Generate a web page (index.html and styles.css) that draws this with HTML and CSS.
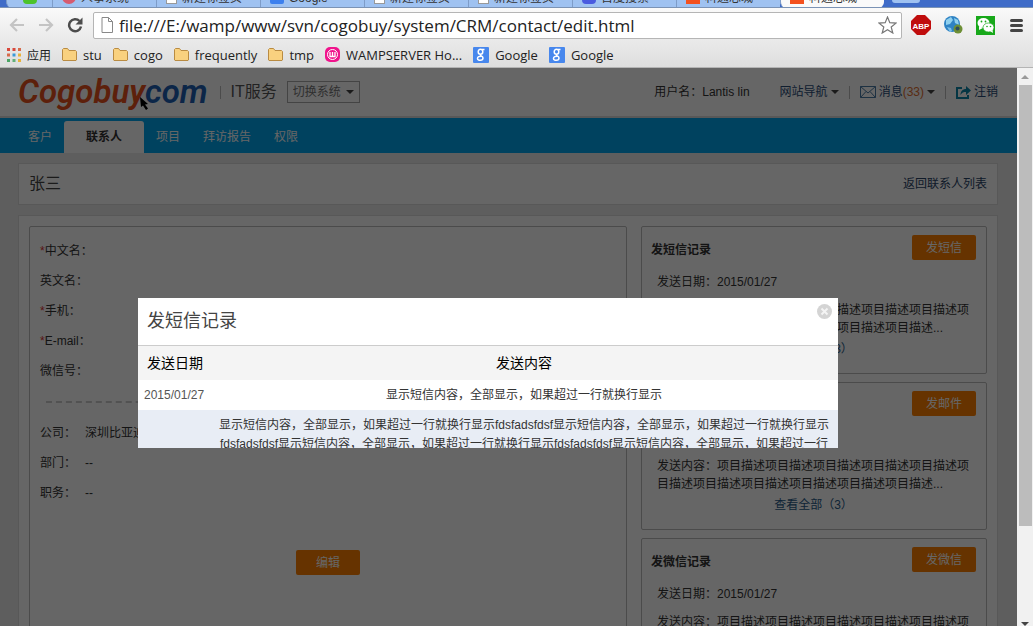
FILE: index.html
```html
<!DOCTYPE html>
<html lang="zh-CN">
<head>
  <meta charset="UTF-8">
  <meta name="viewport" content="width=device-width, initial-scale=1.0">
  <title>编辑联系人</title>
  <link rel="stylesheet" href="styles.css">
</head>
<body>
  <!-- browser -->
  <div class="tab-strip">
    <div class="tab tab-first"><i class="fav green"></i></div>
    <div class="tab"><i class="fav red"></i>人事系统</div>
    <div class="tab"><i class="fav doc"></i>新建标签页</div>
    <div class="tab"><i class="fav blue"></i>Google</div>
    <div class="tab"><i class="fav doc"></i>新建标签页</div>
    <div class="tab"><i class="fav doc"></i>新建标签页</div>
    <div class="tab"><i class="fav paw"></i>百度搜索</div>
    <div class="tab"><i class="fav orange"></i>科通芯城</div>
    <div class="tab current"><i class="fav orange"></i>科通芯城</div>
    <div class="new-tab"></div>
  </div>

  <div class="toolbar">
    <button class="tool" aria-label="后退"><svg width="16" height="14" viewBox="0 0 16 14"><path d="M15 7H2M8 1L2 7l6 6" fill="none" stroke="#c4c4c4" stroke-width="2.2"/></svg></button>
    <button class="tool" aria-label="前进"><svg width="16" height="14" viewBox="0 0 16 14"><path d="M1 7h13M8 1l6 6-6 6" fill="none" stroke="#c4c4c4" stroke-width="2.2"/></svg></button>
    <button class="tool" aria-label="刷新"><svg width="16" height="16" viewBox="0 0 16 16"><path d="M12.5 4A6 6 0 1 0 14 9.500" fill="none" stroke="#4c4c4c" stroke-width="2.500"/><path d="M15.500 0.500v7h-7z" fill="#4c4c4c"/></svg></button>
    <div class="address">
      <svg width="12" height="16" viewBox="0 0 12 16"><path d="M1 .5h6.500l4 4v11H1zM7.500.5v4h4" fill="#fff" stroke="#888"/></svg>
      <input type="text" class="url" aria-label="地址" value="file:///E:/wamp/www/svn/cogobuy/system/CRM/contact/edit.html">
      <svg width="19" height="18" viewBox="0 0 19 18"><path d="M9.500 1l2.300 5.700 6.200.4-4.800 3.900 1.600 6-5.300-3.300L4.200 17l1.600-6L1 7.100l6.200-.4z" fill="#fff" stroke="#777" stroke-width="1.200"/></svg>
    </div>
    <div class="extensions">
      <svg width="20" height="20" viewBox="0 0 20 20"><path d="M6 0h8l6 6v8l-6 6H6l-6-6V6z" fill="#c00d0d"/><text x="10" y="13.500" text-anchor="middle" class="abp">ABP</text></svg>
      <svg width="19" height="18" viewBox="0 0 19 18"><circle cx="8" cy="8" r="8" fill="#2f83c4"/><path d="M2 4l5-3 2 3-3 4-4 1zM10 2l4 2 1 5-4-2z" fill="#8fd0ee"/><path d="M3 11l4 1 1 3-2 1z" fill="#7ec0e8"/><circle cx="14" cy="13" r="4.500" fill="#6d8f35"/><circle cx="13.500" cy="12.500" r="2" fill="#314d5c"/></svg>
      <svg width="19" height="19" viewBox="0 0 19 19"><path d="M0 0h19v19H0z" fill="#17a81a"/><ellipse cx="7.500" cy="7" rx="6" ry="5" fill="#fff"/><path d="M3 10l0 4 4-2z" fill="#fff"/><ellipse cx="12.500" cy="11.500" rx="5.500" ry="4.500" fill="#fff" stroke="#17a81a" stroke-width=".7"/><path d="M14 15l3 2-.5-3z" fill="#fff"/><g fill="#17a81a"><circle cx="5.500" cy="5.500" r=".9"/><circle cx="9.500" cy="5.500" r=".9"/><circle cx="11" cy="10.500" r=".8"/><circle cx="14.500" cy="10.500" r=".8"/></g></svg>
      <svg width="13" height="13" viewBox="0 0 13 13"><path d="M1.500 1.500h10M1.500 6.500h10M1.500 11.500h10" stroke="#444" stroke-width="3" stroke-linecap="round"/></svg>
    </div>
  </div>

  <div class="bookmarks">
    <a href="#"><svg width="14" height="14" viewBox="0 0 14 14"><path d="M0 0h3v3H0zM5.500 0h3v3h-3z" fill="#d9483b"/><path d="M11 0h3v3h-3zM0 5.500h3v3H0z" fill="#d66a4a"/><path d="M5.500 5.500h3v3h-3z" fill="#3b9ad9"/><path d="M11 5.500h3v3h-3zM11 11h3v3h-3z" fill="#e9b23a"/><path d="M0 11h3v3H0z" fill="#4aa564"/><path d="M5.500 11h3v3h-3z" fill="#63b07a"/></svg>应用</a>
    <a href="#"><svg class="folder" width="15" height="13" viewBox="0 0 15 13"><path d="M.5 12V1.500l1-1h4l1.500 2h6.500l1 1V12l-.5.500H1z"/></svg>stu</a>
    <a href="#"><svg class="folder" width="15" height="13" viewBox="0 0 15 13"><path d="M.5 12V1.500l1-1h4l1.500 2h6.500l1 1V12l-.5.500H1z"/></svg>cogo</a>
    <a href="#"><svg class="folder" width="15" height="13" viewBox="0 0 15 13"><path d="M.5 12V1.500l1-1h4l1.500 2h6.500l1 1V12l-.5.500H1z"/></svg>frequently</a>
    <a href="#"><svg class="folder" width="15" height="13" viewBox="0 0 15 13"><path d="M.5 12V1.500l1-1h4l1.500 2h6.500l1 1V12l-.5.500H1z"/></svg>tmp</a>
    <a href="#"><svg width="15" height="15" viewBox="0 0 15 15"><rect width="15" height="15" rx="5" fill="#f0148c"/><circle cx="7.500" cy="7.500" r="5" fill="none" stroke="#fff"/><path d="M5 5v4.500h5V5M7.500 5v4" fill="none" stroke="#fff" stroke-width="1.300"/></svg>WAMPSERVER Ho...</a>
    <a href="#"><svg width="16" height="16" viewBox="0 0 16 16"><rect width="16" height="16" rx="1" fill="#4787ed"/><g fill="none" stroke="#fff" stroke-width="1.500"><ellipse cx="7.500" cy="4.800" rx="2.300" ry="2.500"/><path d="M9 2.500h2.500M8 7.500c-2 1 2 1.500 2 3.500 0 3-5.500 3-5.500.5 0-1.800 2-2.200 4-2.200"/></g></svg>Google</a>
    <a href="#"><svg width="16" height="16" viewBox="0 0 16 16"><rect width="16" height="16" rx="1" fill="#4787ed"/><g fill="none" stroke="#fff" stroke-width="1.500"><ellipse cx="7.500" cy="4.800" rx="2.300" ry="2.500"/><path d="M9 2.500h2.500M8 7.500c-2 1 2 1.500 2 3.500 0 3-5.500 3-5.500.5 0-1.800 2-2.200 4-2.200"/></g></svg>Google</a>
  </div>

  <div class="viewport">
    <div class="page">
      <header class="header">
        <div class="logo"><span>Cogobuy</span><span class="com">com</span>
          <svg class="pointer" width="9" height="13" viewBox="0 0 9 13"><path d="M0 0l8 7-3 .5 3 4-2 1.500-3-4.500L1 10z" fill="#000"/></svg>
        </div>
        <span class="sep"></span>
        <span class="service">IT服务</span>
        <div class="switch">
          <select aria-label="切换系统"><option>切换系统</option></select>
          <i class="caret"></i>
        </div>
        <div class="user">
          <span class="name">用户名：Lantis lin</span>
          <a href="#">网站导航<i class="caret"></i></a>
          <span class="sep"></span>
          <a href="#"><svg width="16" height="12" viewBox="0 0 16 12"><path d="M.5.5h15v11H.5zM.5.5L8 7l7.500-6.500M.5 11.500L6 5.500M15.500 11.500L10 5.500" fill="none" stroke="#4a7ba6"/></svg>消息<em>(33)</em><i class="caret"></i></a>
          <span class="sep"></span>
          <a href="#"><svg width="15" height="13" viewBox="0 0 15 13"><path d="M6 2H1v10h11V9" fill="none" stroke="#0d87ab" stroke-width="2"/><path d="M4.500 9C4.500 5 7 3 10 3V0l5 4.500L10 9V6C7.500 6 6 6.500 4.500 9z" fill="#0d87ab"/></svg>注销</a>
        </div>
      </header>

      <nav class="nav">
        <a href="#">客户</a>
        <a href="#" class="active">联系人</a>
        <a href="#">项目</a>
        <a href="#">拜访报告</a>
        <a href="#">权限</a>
      </nav>

      <main class="content">
        <div class="title-bar">
          <h1>张三</h1>
          <a href="#">返回联系人列表</a>
        </div>

        <div class="main-box">
          <section class="panel form">
            <div class="row"><b>*</b>中文名：</div>
            <div class="row">英文名：</div>
            <div class="row"><b>*</b>手机：</div>
            <div class="row"><b>*</b>E-mail：</div>
            <div class="row">微信号：</div>
            <hr>
            <div class="row"><span>公司：</span>深圳比亚迪</div>
            <div class="row"><span>部门：</span>--</div>
            <div class="row"><span>职务：</span>--</div>
            <button class="btn edit">编辑</button>
          </section>

          <div class="records">
            <section class="panel record">
              <div class="record-head"><h2>发短信记录</h2><button class="btn">发短信</button></div>
              <p class="date">发送日期：2015/01/27</p>
              <p class="desc">发送内容：项目描述项目描述项目描述项目描述项目描述项目描述项目描述项目描述项目描述项目描述项目描述...</p>
              <a href="#" class="more">查看全部（3）</a>
            </section>
            <section class="panel record">
              <div class="record-head"><h2>发邮件记录</h2><button class="btn">发邮件</button></div>
              <p class="date">发送日期：2015/01/27</p>
              <p class="desc">发送内容：项目描述项目描述项目描述项目描述项目描述项目描述项目描述项目描述项目描述项目描述项目描述...</p>
              <a href="#" class="more">查看全部（3）</a>
            </section>
            <section class="panel record">
              <div class="record-head"><h2>发微信记录</h2><button class="btn">发微信</button></div>
              <p class="date">发送日期：2015/01/27</p>
              <p class="desc">发送内容：项目描述项目描述项目描述项目描述项目描述项目描述项目描述项目描述项目描述项目描述项目描述...</p>
              <a href="#" class="more">查看全部（3）</a>
            </section>
          </div>
        </div>
      </main>

      <div class="overlay"></div>
      <div class="modal" role="dialog" aria-labelledby="modalTitle">
        <div class="modal-head">
          <h3 id="modalTitle">发短信记录</h3>
          <button class="close" aria-label="关闭"><svg width="15" height="15" viewBox="0 0 15 15"><circle cx="7.500" cy="7.500" r="7.500" fill="#d4d4d4"/><path d="M4.500 4.500l6 6M10.500 4.500l-6 6" stroke="#f4f4f4" stroke-width="2"/></svg></button>
        </div>
        <table>
          <thead>
            <tr><th class="col-date">发送日期</th><th>发送内容</th></tr>
          </thead>
          <tbody>
            <tr><td class="col-date">2015/01/27</td><td>显示短信内容，全部显示，如果超过一行就换行显示</td></tr>
            <tr><td class="col-date"></td><td>显示短信内容，全部显示，如果超过一行就换行显示fdsfadsfdsf显示短信内容，全部显示，如果超过一行就换行显示fdsfadsfdsf显示短信内容，全部显示，如果超过一行就换行显示fdsfadsfdsf显示短信内容，全部显示，如果超过一行</td></tr>
          </tbody>
        </table>
      </div>
    </div>

    <div class="scrollbar">
      <i class="caret up"></i>
      <div class="thumb"></div>
      <i class="caret"></i>
    </div>
  </div>
</body>
</html>
```
FILE: styles.css
```css
* {
  margin: 0;
  padding: 0;
  box-sizing: border-box;
}

body {
  height: 100vh;
  display: flex;
  flex-direction: column;
  overflow: hidden;
  font: 12px/18px "Liberation Sans", "Noto Sans CJK SC", sans-serif;
  color: #333;
}

a {
  text-decoration: none;
}

button, input, select {
  font: inherit;
  border: none;
  background: none;
}

svg {
  display: block;
  flex: none;
}

/* browser */
.tab-strip {
  display: flex;
  flex: none;
  height: 8px;
  overflow: hidden;
  background: #3f6cc8;
  border-bottom: 1px solid #7b93b5;
}

.tab {
  display: flex;
  align-items: flex-end;
  gap: 5px;
  flex: 0 1 104px;
  height: 8px;
  padding: 0 8px 4px 9px;
  overflow: hidden;
  background: #9fc2f1;
  border-left: 1px solid #7e9cc8;
  white-space: nowrap;
  line-height: 12px;
}

.tab-first {
  flex-basis: 46px;
  margin-left: 6px;
  padding-left: 16px;
  border-radius: 0 0 0 6px;
}

.tab.current {
  background: #fafafa;
  border-radius: 0 0 6px 6px;
}

.new-tab {
  width: 28px;
  height: 3px;
  margin-left: 8px;
  background: #9fc2f1;
  border-radius: 0 0 4px 4px;
}

.fav {
  flex: none;
  width: 14px;
  height: 14px;
}

.green { background: #4cc32c; border-radius: 4px; }
.red { background: #d65b70; border-radius: 7px; }
.doc { background: #fff; border: 1px solid #999; width: 11px; }
.blue { background: #3d80ee; border-radius: 2px; }
.paw { background: #4a5be0; border-radius: 4px; }
.orange { background: #f4511e; }

.toolbar {
  display: flex;
  align-items: center;
  flex: none;
  height: 34px;
  padding: 0 9px;
  background: linear-gradient(#fafafa, #e9e9e9);
}

.tool {
  margin-right: 13px;
}

.tool:nth-child(3) {
  margin-right: 10px;
}

.address {
  flex: 1;
  display: flex;
  align-items: center;
  gap: 6px;
  height: 27px;
  padding: 0 4px 0 7px;
  background: #fff;
  border: 1px solid #b5b5b5;
  border-radius: 2px;
}

.url {
  flex: 1;
  min-width: 0;
  font-family: "Open Sans", sans-serif;
  font-size: 17px;
  line-height: 25px;
  color: #222;
  outline: none;
}

.extensions {
  display: flex;
  align-items: center;
  gap: 13px;
  margin-left: 9px;
}

.extensions svg:last-child {
  margin-left: 2px;
}

.toolbar {
  padding-right: 10px;
}

.abp {
  font: bold 8px "Liberation Sans", sans-serif;
  fill: #fff;
}

.bookmarks {
  display: flex;
  align-items: center;
  gap: 11px;
  flex: none;
  height: 26px;
  padding: 0 7px;
  background: linear-gradient(#e9e9e9, #dedede);
  border-bottom: 1px solid #b4b4b4;
}

.bookmarks a {
  display: flex;
  align-items: center;
  gap: 6px;
  font-family: "Open Sans", sans-serif;
  font-size: 13px;
  color: #222;
  white-space: nowrap;
}

.bookmarks a:first-child {
  font-family: "Noto Sans CJK SC", sans-serif;
  font-size: 12px;
}

.folder {
  fill: #f9d17f;
  stroke: #b98b42;
}

.viewport {
  flex: 1;
  display: flex;
  min-height: 0;
}

.scrollbar {
  flex: none;
  width: 16px;
  display: flex;
  flex-direction: column;
  align-items: center;
  gap: 6px;
  padding-top: 7px;
  background: #f1f1f1;
}

.thumb {
  flex: none;
  width: 13px;
  height: 80%;
  background: #bcbcbc;
}

.scrollbar > .caret:last-child {
  margin-top: auto;
}

/* page */
.page {
  flex: 1;
  min-width: 0;
  position: relative;
  overflow: hidden;
  background: #ebebeb;
}

.caret {
  flex: none;
  border: 4px solid transparent;
  border-top-color: #444;
  border-bottom: none;
}

.caret.up {
  border-top: none;
  border-bottom: 4px solid #999;
}

.header {
  display: flex;
  align-items: center;
  height: 50px;
  padding: 0 19px 0 18px;
  background: #fff;
  border-bottom: 2px solid #ddd;
}

.logo {
  position: relative;
  font: italic 600 33px/40px Roboto, sans-serif;
  color: #e8501c;
}

.com {
  color: #1e5fb4;
}

.pointer {
  position: absolute;
  left: 122px;
  top: 25px;
}

.sep {
  width: 1px;
  height: 13px;
  background: #bbb;
}

.header > .sep {
  margin: 0 10px 0 12px;
}

.service {
  font-size: 16px;
  color: #555;
}

.switch {
  display: flex;
  align-items: center;
  height: 22px;
  margin-left: 10px;
  padding: 0 5px;
  border: 1px solid #aaa;
}

.switch select {
  width: 53px;
  appearance: none;
  color: #777;
}

.user {
  display: flex;
  align-items: center;
  gap: 10px;
  margin-left: auto;
}

.name {
  margin-right: 20px;
}

.user a {
  display: flex;
  align-items: center;
  gap: 3px;
  color: #2a4c78;
}

.user em {
  margin-left: -3px;
  font-style: normal;
  color: #e07030;
}

.nav {
  display: flex;
  align-items: flex-end;
  gap: 1px;
  height: 35px;
  padding-left: 17px;
  background: #00a5ee;
}

.nav a {
  padding: 0 11px;
  line-height: 32px;
  color: #fff;
}

.nav .active {
  padding: 0 22px;
  font-weight: bold;
  color: #333;
  background: #fff;
  border-radius: 3px 3px 0 0;
}

.content {
  padding: 10px 19px 0 18px;
}

.title-bar {
  display: flex;
  align-items: center;
  justify-content: space-between;
  height: 42px;
  padding: 0 10px;
  background: #fff;
  border: 1px solid #ddd;
}

.title-bar h1 {
  font-size: 16px;
  font-weight: normal;
  color: #444;
}

.title-bar a {
  color: #2a4468;
}

.main-box {
  display: flex;
  gap: 14px;
  min-height: 600px;
  margin-top: 10px;
  padding: 10px;
  background: #fff;
  border: 1px solid #ddd;
}

.panel {
  border: 1px solid #bbb;
  border-radius: 2px;
}

.form {
  flex: 1;
  padding: 9px 10px;
}

.row {
  line-height: 30px;
}

.row b {
  font-weight: normal;
  color: #d33;
}

.row span {
  display: inline-block;
  width: 45px;
}

.form hr {
  margin: 15px 6px;
  border: none;
  border-top: 2px dashed #ccc;
}

.btn {
  width: 64px;
  height: 25px;
  color: #fff;
  background: #ff8000;
  border-radius: 2px;
}

.edit {
  display: block;
  margin: 42px auto 0;
}

.records {
  flex: none;
  width: 346px;
  display: flex;
  flex-direction: column;
  gap: 8px;
}

.record {
  height: 148px;
  padding: 8px 10px 0 9px;
}

.record-head {
  display: flex;
  justify-content: space-between;
}

.record h2 {
  font-size: 12px;
  line-height: 30px;
}

.record p {
  padding: 0 5px 0 6px;
}

.record .date {
  margin: 8px 0 10px;
}

.record .more {
  display: block;
  margin-top: 3px;
  text-align: center;
  color: #2a5a88;
}

.overlay {
  position: absolute;
  inset: 0;
  background: rgba(0, 0, 0, 0.6);
}

.modal {
  position: absolute;
  top: 230px;
  left: 138px;
  width: 700px;
  height: 150px;
  overflow: hidden;
  background: #fff;
}

.modal-head {
  display: flex;
  justify-content: space-between;
  align-items: flex-start;
  height: 48px;
  padding: 6px 6px 0 9px;
  border-bottom: 1px solid #ccc;
}

.modal h3 {
  font-size: 18px;
  font-weight: normal;
  line-height: 34px;
  color: #444;
}

.modal table {
  width: 100%;
  border-collapse: collapse;
  text-align: center;
}

.modal th {
  height: 34px;
  font-size: 14px;
  font-weight: normal;
  color: #000;
  background: #f4f4f4;
}

.modal td {
  padding: 6px 6px 5px;
  line-height: 19px;
}

.modal tr:nth-child(even) td {
  background: #e8edf5;
}

.modal .col-date {
  width: 72px;
  text-align: left;
  white-space: nowrap;
  color: #555;
}

.modal th.col-date {
  padding-left: 9px;
  color: #000;
}
```
